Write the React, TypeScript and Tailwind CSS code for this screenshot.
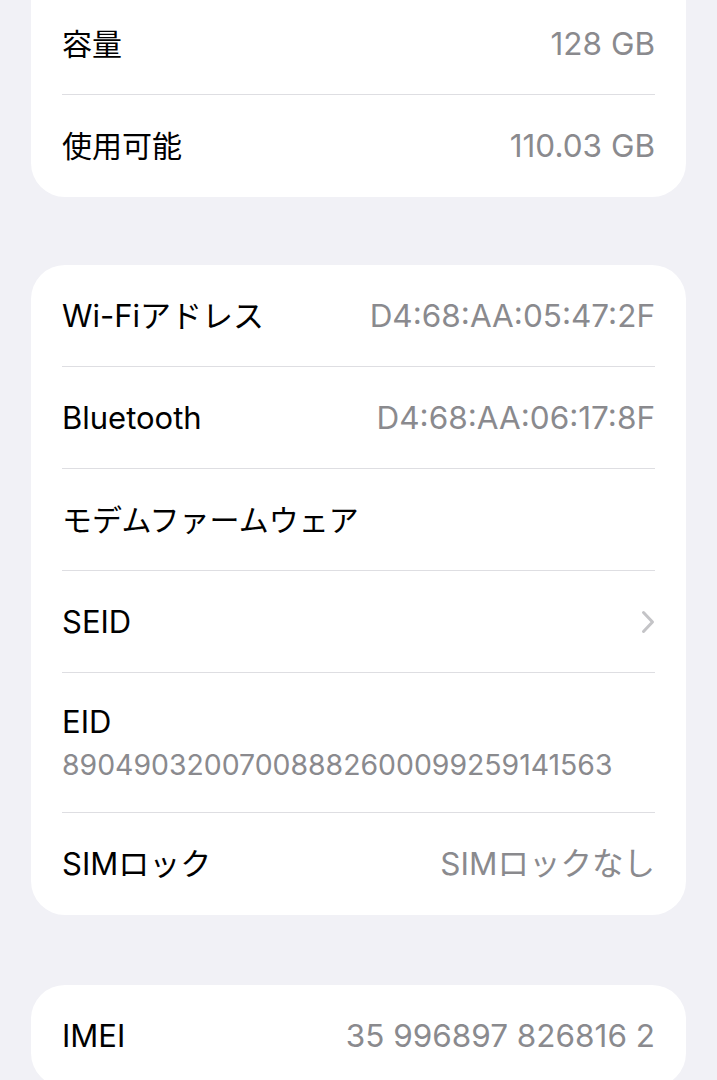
import React from "react"

const font = { fontFamily: "Inter, 'Noto Sans CJK JP', sans-serif" }

type Row = { label: string; value?: string; chevron?: boolean; stacked?: boolean; cjk?: boolean }

function Chevron() {
  return (
    <svg width="14" height="24" viewBox="0 0 14 24" fill="none" className="shrink-0">
      <path d="M2.5 2.5 L11.5 12 L2.5 21.5" stroke="#c4c4c7" strokeWidth="3" strokeLinecap="round" strokeLinejoin="round" />
    </svg>
  )
}

function Card({ rows, className = "" }: { rows: Row[]; className?: string }) {
  return (
    <div className={`mx-[31px] bg-white px-[31px] ${className}`}>
      {rows.map((r, i) => {
        const last = i === rows.length - 1
        const border = last ? "" : "border-b border-[#dedee2]"
        if (r.stacked) {
          return (
            <div key={r.label} className={`flex h-[140px] flex-col justify-center ${border}`}>
              <div className="text-[31px] leading-[36px] text-black">{r.label}</div>
              <div className="mt-[8px] text-[28.4px] leading-[34px] text-[#8a8a8e]">{r.value}</div>
            </div>
          )
        }
        return (
          <div key={r.label} className={`flex h-[102px] items-center justify-between ${border}`}>
            <span className={`${r.cjk ? "text-[30px]" : "text-[31px]"} leading-[36px] text-black`}>{r.label}</span>
            {r.value && <span className="text-[31.5px] leading-[36px] text-[#8a8a8e]">{r.value}</span>}
            {r.chevron && <Chevron />}
          </div>
        )
      })}
    </div>
  )
}

export default function App() {
  return (
    <div className="h-[1080px] w-[717px] overflow-hidden bg-[#f1f1f6]" style={font}>
      <Card
        className="-mt-[7px] rounded-b-[34px]"
        rows={[
          { label: "容量", value: "128 GB", cjk: true },
          { label: "使用可能", value: "110.03 GB", cjk: true },
        ]}
      />
      <Card
        className="mt-[68px] rounded-[34px]"
        rows={[
          { label: "Wi-Fiアドレス", value: "D4:68:AA:05:47:2F" },
          { label: "Bluetooth", value: "D4:68:AA:06:17:8F" },
          { label: "モデムファームウェア", cjk: true },
          { label: "SEID", chevron: true },
          { label: "EID", value: "89049032007008882600099259141563", stacked: true },
          { label: "SIMロック", value: "SIMロックなし" },
        ]}
      />
      <Card className="mt-[70px] rounded-[34px]" rows={[{ label: "IMEI", value: "35 996897 826816 2" }]} />
    </div>
  )
}
